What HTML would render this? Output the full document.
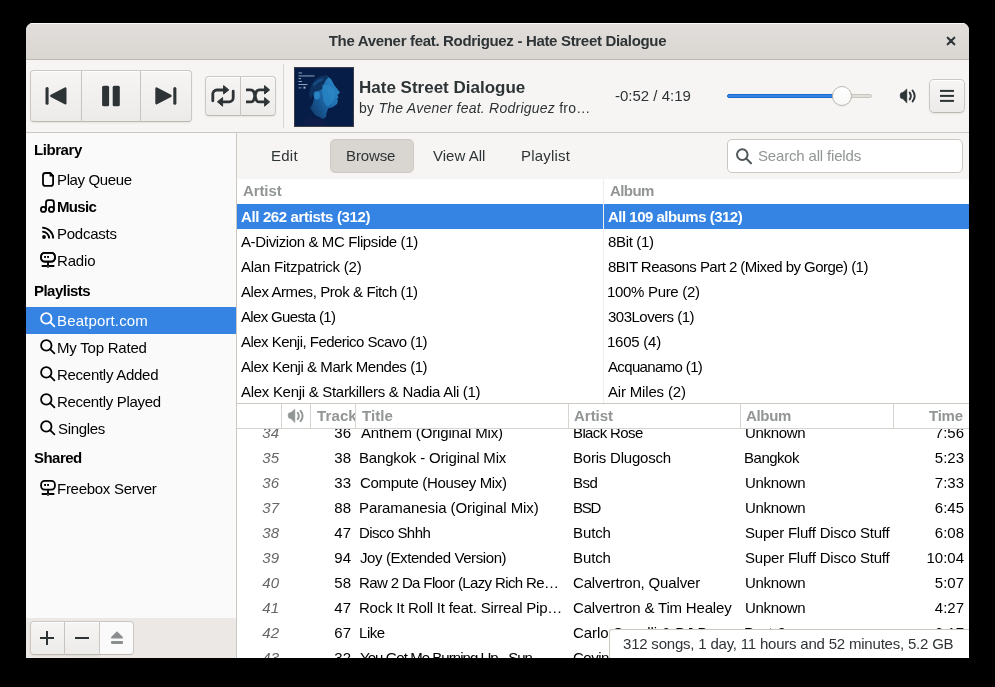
<!DOCTYPE html>
<html><head><meta charset="utf-8">
<style>
*{box-sizing:border-box;margin:0;padding:0}
html,body{width:995px;height:687px;overflow:hidden;background:#000;font-family:"Liberation Sans",sans-serif;color:#2e3436}
.a{position:absolute}
.t{position:absolute;white-space:nowrap;line-height:20px;will-change:transform}
#win{position:absolute;left:26px;top:23px;width:943px;height:635px;background:#f6f5f4;border-radius:7px 7px 0 0;overflow:hidden}
#title{position:absolute;left:0;top:0;width:943px;height:37px;background:linear-gradient(#e1dedb,#dad6d2);border-bottom:1px solid #bfb8b1;box-shadow:inset 0 1px rgba(255,255,255,0.8)}
.btn{position:absolute;background:linear-gradient(#f6f5f4,#edebe9);border:1px solid #cdc7c2;border-bottom-color:#bfb8b1;box-shadow:inset 0 1px #fff,0 1px 2px rgba(0,0,0,0.07)}
#side{color:#000;position:absolute;left:0;top:110px;width:211px;height:525px;background:#fafafa;border-right:1px solid #cdc7c2;overflow:hidden}
#main{position:absolute;left:211px;top:110px;width:732px;height:525px;overflow:hidden}
</style></head><body>
<div id="win">
  <div id="title">
    <div class="t" style="left:0;width:943px;text-align:center;top:8px;font-weight:bold;font-size:15px;letter-spacing:-0.32px">The Avener feat. Rodriguez - Hate Street Dialogue</div>
    <svg class="a" style="left:915px;top:8px" width="20" height="20" viewBox="941 31 20 20"><path d="M947.7,37.7 L954.3,44.3 M954.3,37.7 L947.7,44.3" stroke="#2e3436" stroke-width="2.1" stroke-linecap="round"/></svg>
  </div>
  <!-- toolbar -->
  <div class="a grp" style="left:4px;top:47px;width:162px;height:52px">
    <div class="btn" style="left:0;top:0;width:52px;height:52px;border-radius:4px 0 0 4px"></div>
    <div class="btn" style="left:52px;top:0;width:59px;height:52px;border-left:none;border-radius:0"></div>
    <div class="btn" style="left:111px;top:0;width:51px;height:52px;border-left:none;border-radius:0 4px 4px 0"></div>
  </div>
  <svg class="a" style="left:0;top:37px" width="943" height="72" viewBox="26 60 943 72">
    <g fill="#2e3436" stroke="#2e3436" stroke-linejoin="round">
      <rect x="45.5" y="87" width="3.1" height="17.8" rx="1.5" stroke="none"/>
      <path d="M51.3,95.9 L65.3,88.5 L65.3,103.3 Z" stroke-width="2.4"/>
      <rect x="102.1" y="85.7" width="7" height="20.5" rx="1.5" stroke="none"/>
      <rect x="112.7" y="85.7" width="7.1" height="20.5" rx="1.5" stroke="none"/>
      <path d="M156.5,88.5 L170.5,95.9 L156.5,103.3 Z" stroke-width="2.4"/>
      <rect x="173.3" y="87" width="3.1" height="17.8" rx="1.5" stroke="none"/>
    </g>
  </svg>
  <div class="a" style="left:179px;top:53px;width:71px;height:40px">
    <div class="btn" style="left:0;top:0;width:36px;height:40px;border-radius:4px 0 0 4px"></div>
    <div class="btn" style="left:36px;top:0;width:35px;height:40px;border-left:none;border-radius:0 4px 4px 0"></div>
  </div>
  <svg class="a" style="left:185px;top:62px" width="26" height="23" viewBox="0 0 26 23">
    <g fill="none" stroke="#2e3436" stroke-width="2.8" stroke-linecap="round">
      <path d="M1.8,15.8 V9 A4,4 0 0 1 5.8,5 H13"/>
      <path d="M22.2,6.2 V12.8 A4,4 0 0 1 18.2,16.8 H11"/>
    </g>
    <g fill="#2e3436" stroke="#2e3436" stroke-width="1" stroke-linejoin="round">
      <path d="M12.6,0.6 L17.8,4.9 L12.6,9 Z"/>
      <path d="M11.6,12.6 L6.4,16.8 L11.6,21.2 Z"/>
    </g>
  </svg>
  <svg class="a" style="left:219px;top:62px" width="26" height="23" viewBox="0 0 26 23">
    <g fill="none" stroke="#2e3436" stroke-width="2.8">
      <path d="M1,4.9 H5.5 C8.5,4.9 8.8,6.5 10,10.9 C11.2,15.3 11.5,16.9 14.5,16.9 H20"/>
      <path d="M1,16.9 H5.5 C8.5,16.9 8.8,15.3 10,10.9 C11.2,6.5 11.5,4.9 14.5,4.9 H20"/>
    </g>
    <g fill="#2e3436" stroke="#2e3436" stroke-width="1" stroke-linejoin="round">
      <path d="M19.6,0.6 L24.6,4.9 L19.6,9 Z"/>
      <path d="M19.6,12.6 L24.6,16.9 L19.6,21.2 Z"/>
    </g>
  </svg>
  <div class="a" style="left:257px;top:41px;width:1px;height:64px;background:#d9d5d1"></div>
  <!-- album art -->
  <div class="a" style="left:268px;top:44px;width:60px;height:60px;border:1px solid #3a3d44;background:#061d47;overflow:hidden">
    <svg width="58" height="58" viewBox="0 0 58 58">
      <defs>
        <linearGradient id="fg" x1="0.1" y1="0.9" x2="0.9" y2="0.2">
          <stop offset="0" stop-color="#103e70"/>
          <stop offset="0.45" stop-color="#1c64a3"/>
          <stop offset="1" stop-color="#2a84c4"/>
        </linearGradient>
        <filter id="bl" x="-10%" y="-10%" width="120%" height="120%"><feGaussianBlur stdDeviation="0.7"/></filter>
      </defs>
      <rect width="58" height="58" fill="#061d47"/><g filter="url(#bl)">
      <path d="M31,7.5 L36,11 L39.5,17.5 L42,20.5 L45,24.5 L42.5,27 L43.5,29.5 L42,31 L43,32.5 L42,36 L38,39 L33,40.5 L31.5,45 L31,49 L28,51 L20,47 L15,40 L18,35 L19,30 L18,24 L22,20 L27,12 Z" fill="url(#fg)"/>
      <path d="M14,27 C15,14 23,7 31,7.5 L33.5,9.5 C30,12 28.5,17 27.5,21 L24,22.5 L19,24 L16,31 Z" fill="#0c305e"/>
      <path d="M18,16 C21,12 25,10 29,10 L27,13 C24,14 21,16 19,19 Z" fill="#16497e"/>
      <ellipse cx="22" cy="27.5" rx="3" ry="4" fill="#2a82c2"/>
      <path d="M27,17 C33,16 38,19 40,24 C41,30 38,36 33,38 C29,38 27,30 27,17 Z" fill="#2f90d0" opacity="0.55"/>
      <path d="M10,49 C17,46 25,50 32,54 L34,58 L8,58 Z" fill="#081f48"/></g>
      <g fill="#9fb4cc">
        <rect x="3.5" y="4.5" width="3.5" height="0.9"/><rect x="3.5" y="7.5" width="16" height="0.9"/>
        <rect x="3.5" y="10.2" width="2.5" height="0.9"/><rect x="3.5" y="13" width="3.5" height="0.9"/>
        <rect x="3.5" y="16" width="9" height="0.9"/><rect x="3.5" y="19.5" width="3" height="0.8"/><rect x="8.5" y="18.6" width="2" height="2"/>
      </g>
    </svg>
  </div>
  <div class="t" style="left:333px;top:55px;font-size:17px;font-weight:bold;line-height:20px">Hate Street Dialogue</div>
  <div class="t" style="left:333px;top:74.5px;font-size:14px;letter-spacing:0.24px;line-height:20px">by <i>The Avener feat. Rodriguez</i> fro…</div>
  <div class="t" style="left:589px;top:63px;font-size:15px;line-height:20px">-0:52 / 4:19</div>
  <!-- slider -->
  <div class="a" style="left:701px;top:71px;width:145px;height:4px;border-radius:2px;background:#e1dedb;border:1px solid #cdc7c2"></div>
  <div class="a" style="left:701px;top:71px;width:118px;height:4px;border-radius:2px;background:#3584e4;border:1px solid #1b6acb"></div>
  <div class="a" style="left:806px;top:63px;width:20px;height:20px;border-radius:50%;background:linear-gradient(#fff,#f8f8f7);border:1px solid #bfb8b1;box-shadow:0 1px 1px rgba(0,0,0,0.05)"></div>
  <!-- volume icon -->
  <svg class="a" style="left:873px;top:65px" width="18" height="16" viewBox="0 0 18 16">
    <path d="M7.9,0.9 V15.1 L3.8,10.8 H3.2 A2.1,3.2 0 0 1 3.2,4.4 H3.8 Z" fill="#2e3436" stroke="#2e3436" stroke-width="0.5" stroke-linejoin="round"/>
    <path d="M10.7,4.6 Q13,8 10.7,11.4" fill="none" stroke="#2e3436" stroke-width="1.9" stroke-linecap="round"/>
    <path d="M13.6,2.5 Q17.8,8 13.6,13.5" fill="none" stroke="#2e3436" stroke-width="1.9" stroke-linecap="round"/>
  </svg>
  <div class="btn" style="left:903px;top:56px;width:36px;height:34px;border-radius:5px"></div>
  <svg class="a" style="left:914px;top:66px" width="14" height="14" viewBox="0 0 14 14">
    <rect x="0" y="0.9" width="14" height="2" fill="#2e3436"/>
    <rect x="0" y="5.9" width="14" height="2" fill="#2e3436"/>
    <rect x="0" y="10.9" width="14" height="2" fill="#2e3436"/>
  </svg>
  <div class="a" style="left:0;top:109px;width:943px;height:1px;background:#cdc7c2"></div>


  <div id="side">
<div class="t" style="left:7.6px;top:7.3px;font-size:15px;font-weight:bold;letter-spacing:-0.433px">Library</div>
<div class="t" style="left:31.0px;top:37.3px;font-size:15px;letter-spacing:-0.378px">Play Queue</div>
<div class="t" style="left:31.2px;top:63.8px;font-size:15px;font-weight:bold;letter-spacing:-0.650px">Music</div>
<div class="t" style="left:31.0px;top:90.8px;font-size:15px;letter-spacing:-0.257px">Podcasts</div>
<div class="t" style="left:31.0px;top:117.8px;font-size:15px;letter-spacing:-0.175px">Radio</div>
<div class="t" style="left:7.6px;top:147.8px;font-size:15px;font-weight:bold;letter-spacing:-0.525px">Playlists</div>
<div class="a" style="left:0px;top:174px;width:210px;height:27px;background:#3584e4"></div>
<div class="t" style="left:31.4px;top:177.8px;font-size:15px;color:#fff;letter-spacing:0.145px">Beatport.com</div>
<div class="t" style="left:31.2px;top:204.8px;font-size:15px;letter-spacing:-0.218px">My Top Rated</div>
<div class="t" style="left:31.2px;top:231.8px;font-size:15px;letter-spacing:-0.277px">Recently Added</div>
<div class="t" style="left:31.2px;top:258.8px;font-size:15px;letter-spacing:-0.300px">Recently Played</div>
<div class="t" style="left:31.7px;top:285.8px;font-size:15px;letter-spacing:-0.317px">Singles</div>
<div class="t" style="left:8.0px;top:315.3px;font-size:15px;font-weight:bold;letter-spacing:-0.540px">Shared</div>
<div class="t" style="left:31.2px;top:345.8px;font-size:15px;letter-spacing:-0.277px">Freebox Server</div>
<svg class="a" style="left:0;top:0" width="210" height="525" viewBox="26 133 210 525">
 <g fill="none" stroke="#000" stroke-width="1.8" stroke-linejoin="round" stroke-linecap="round">
  <path d="M45.5,173 H50.2 L53.1,176 V183.4 A2.5,2.5 0 0 1 50.6,185.9 H45.5 A2.5,2.5 0 0 1 43,183.4 V175.5 A2.5,2.5 0 0 1 45.5,173 Z"/>
  <path d="M46,209.4 V202.7 A2.5,2.5 0 0 1 48.5,200.2 H51.4 A2.5,2.5 0 0 1 53.9,202.7 V209.4"/>
  <circle cx="43.4" cy="209.4" r="2.5"/><circle cx="51.4" cy="209.4" r="2.5"/>
  <rect x="41.1" y="252.8" width="13.8" height="8.8" rx="3.5"/>
 </g>
 <path d="M50.2,173 V176 H53.1 Z" fill="#000" stroke="#000" stroke-width="1.2" stroke-linejoin="round"/>
 <g fill="none" stroke="#000" stroke-width="1.9">
  <path d="M42.2,231.6 A7,7 0 0 1 49.2,238.6"/>
  <path d="M42.2,227.6 A11,11 0 0 1 53.2,238.6"/>
 </g>
 <circle cx="44" cy="237" r="1.9" fill="#000"/>
 <g fill="none" stroke="#000" stroke-width="1.8" stroke-linejoin="round" stroke-linecap="round"><rect x="41.1" y="252.8" width="13.8" height="8.8" rx="3.5"/><path d="M48,262.5 V264.8 M42.4,266.0 H46.6 M49.4,266.0 H53.7"/></g><g fill="#000"><rect x="44.1" y="256.0" width="1.9" height="1.9"/><rect x="47.1" y="256.0" width="1.9" height="1.9"/></g><circle cx="48" cy="266.0" r="1.3" fill="none" stroke="#000" stroke-width="1"/>
 <g fill="none" stroke-width="1.8" stroke-linecap="round">
  <circle cx="46.3" cy="318.4" r="5.2" stroke="#fff"/><path d="M50.1,322.2 L54.4,326.3" stroke="#fff"/>
  <circle cx="46.3" cy="345.4" r="5.2" stroke="#000"/><path d="M50.1,349.2 L54.4,353.3" stroke="#000"/><circle cx="46.3" cy="372.4" r="5.2" stroke="#000"/><path d="M50.1,376.2 L54.4,380.3" stroke="#000"/><circle cx="46.3" cy="399.4" r="5.2" stroke="#000"/><path d="M50.1,403.2 L54.4,407.3" stroke="#000"/><circle cx="46.3" cy="426.4" r="5.2" stroke="#000"/><path d="M50.1,430.2 L54.4,434.3" stroke="#000"/>
 </g>
 <g fill="none" stroke="#000" stroke-width="1.8" stroke-linejoin="round" stroke-linecap="round"><rect x="41.1" y="480.8" width="13.8" height="8.8" rx="3.5"/><path d="M48,490.5 V492.8 M42.4,494.0 H46.6 M49.4,494.0 H53.7"/></g><g fill="#000"><rect x="44.1" y="484.0" width="1.9" height="1.9"/><rect x="47.1" y="484.0" width="1.9" height="1.9"/></g><circle cx="48" cy="494.0" r="1.3" fill="none" stroke="#000" stroke-width="1"/>
</svg>
<div class="a" style="left:0px;top:485px;width:210px;height:40px;background:#ebe8e6"></div>
<div class="btn" style="left:4px;top:488px;width:35px;height:34px;border-radius:4px 0 0 4px"></div>
<div class="btn" style="left:39px;top:488px;width:35px;height:34px;border-left:none;border-radius:0"></div>
<div class="btn" style="left:74px;top:488px;width:34px;height:34px;border-left:none;border-radius:0 4px 4px 0;background:#fafafa;box-shadow:none"></div>
<svg class="a" style="left:0;top:0" width="210" height="525" viewBox="26 133 210 525">
 <path d="M47,631 V645 M40,638 H54" stroke="#2e3436" stroke-width="2"/>
 <path d="M75,638 H89" stroke="#2e3436" stroke-width="2"/>
 <path d="M117,631.3 L122.8,637 Q123.5,638.6 122,638.6 H112 Q110.5,638.6 111.2,637 Z" fill="#8b8e8f"/>
 <rect x="111" y="641" width="12" height="3" rx="1" fill="#8b8e8f"/>
</svg>
  </div>
  <div id="main">
<div class="a" style="left:0px;top:0px;width:732px;height:46px;background:#f6f5f4"></div>
<div class="t" style="left:34.2px;top:12.8px;font-size:15px;letter-spacing:0.233px">Edit</div>
<div class="a" style="left:93px;top:6px;width:84px;height:34px;background:#d9d5d1;border:1px solid #cfcac6;border-radius:5px"></div>
<div class="t" style="left:109.4px;top:12.8px;font-size:15px;letter-spacing:-0.120px">Browse</div>
<div class="t" style="left:196.0px;top:12.8px;font-size:15px;letter-spacing:0.029px">View All</div>
<div class="t" style="left:284.2px;top:12.8px;font-size:15px;letter-spacing:0.200px">Playlist</div>
<div class="a" style="left:490px;top:6px;width:236px;height:34px;background:#fff;border:1px solid #cdc7c2;border-radius:5px"></div>
<svg class="a" style="left:0;top:0" width="732" height="60" viewBox="237 133 732 60">
 <circle cx="742.3" cy="154.6" r="5.3" fill="none" stroke="#50575a" stroke-width="2"/>
 <path d="M746.2,158.5 L751,163.3" stroke="#50575a" stroke-width="2" stroke-linecap="round"/>
</svg>
<div class="t" style="left:520.6px;top:12.8px;font-size:15px;color:#929595;letter-spacing:-0.169px">Search all fields</div>
<div class="a" style="left:0px;top:46px;width:732px;height:224px;background:#fff"></div>
<div class="a" style="left:366px;top:46px;width:1px;height:224px;background:#f1efed"></div>
<div class="t" style="left:5.7px;top:47.8px;font-size:15px;font-weight:bold;color:#929595;letter-spacing:-0.100px">Artist</div>
<div class="t" style="left:372.8px;top:47.8px;font-size:15px;font-weight:bold;color:#929595;letter-spacing:-0.575px">Album</div>
<div class="a" style="left:0px;top:71px;width:366px;height:25px;background:#3584e4"></div>
<div class="a" style="left:367px;top:71px;width:365px;height:25px;background:#3584e4"></div>
<div class="t" style="left:4.2px;top:73.8px;font-size:15px;font-weight:bold;color:#fff;letter-spacing:-0.365px">All 262 artists (312)</div>
<div class="t" style="left:370.9px;top:73.8px;font-size:15px;font-weight:bold;color:#fff;letter-spacing:-0.505px">All 109 albums (312)</div>
<div class="t" style="left:4.1px;top:98.8px;font-size:15px;color:#000;letter-spacing:-0.385px">A-Divizion &amp; MC Flipside (1)</div>
<div class="t" style="left:370.6px;top:98.8px;font-size:15px;color:#000;letter-spacing:-0.343px">8Bit (1)</div>
<div class="t" style="left:4.1px;top:123.8px;font-size:15px;color:#000;letter-spacing:-0.232px">Alan Fitzpatrick (2)</div>
<div class="t" style="left:370.6px;top:123.8px;font-size:15px;color:#000;letter-spacing:-0.541px">8BIT Reasons Part 2 (Mixed by Gorge) (1)</div>
<div class="t" style="left:4.1px;top:148.8px;font-size:15px;color:#000;letter-spacing:-0.419px">Alex Armes, Prok &amp; Fitch (1)</div>
<div class="t" style="left:370.1px;top:148.8px;font-size:15px;color:#000;letter-spacing:-0.317px">100% Pure (2)</div>
<div class="t" style="left:4.1px;top:173.8px;font-size:15px;color:#000;letter-spacing:-0.657px">Alex Guesta (1)</div>
<div class="t" style="left:370.6px;top:173.8px;font-size:15px;color:#000;letter-spacing:-0.500px">303Lovers (1)</div>
<div class="t" style="left:4.1px;top:198.8px;font-size:15px;color:#000;letter-spacing:-0.524px">Alex Kenji, Federico Scavo (1)</div>
<div class="t" style="left:370.1px;top:198.8px;font-size:15px;color:#000;letter-spacing:-0.243px">1605 (4)</div>
<div class="t" style="left:4.1px;top:223.8px;font-size:15px;color:#000;letter-spacing:-0.437px">Alex Kenji &amp; Mark Mendes (1)</div>
<div class="t" style="left:371.2px;top:223.8px;font-size:15px;color:#000;letter-spacing:-0.642px">Acquanamo (1)</div>
<div class="t" style="left:4.1px;top:248.8px;font-size:15px;color:#000;letter-spacing:-0.290px">Alex Kenji &amp; Starkillers &amp; Nadia Ali (1)</div>
<div class="t" style="left:371.2px;top:248.8px;font-size:15px;color:#000;letter-spacing:-0.175px">Air Miles (2)</div>
<div class="a" style="left:0px;top:270px;width:732px;height:1px;background:#cdc7c2"></div>
<div class="a" style="left:0px;top:271px;width:732px;height:24px;background:#fff"></div>
<div class="a" style="left:0px;top:295px;width:732px;height:1px;background:#d8d4d0"></div>
<div class="a" style="left:44px;top:271px;width:1px;height:24px;background:#d8d4d0"></div>
<div class="a" style="left:73px;top:271px;width:1px;height:24px;background:#d8d4d0"></div>
<div class="a" style="left:118px;top:271px;width:1px;height:24px;background:#d8d4d0"></div>
<div class="a" style="left:331px;top:271px;width:1px;height:24px;background:#d8d4d0"></div>
<div class="a" style="left:503px;top:271px;width:1px;height:24px;background:#d8d4d0"></div>
<div class="a" style="left:656px;top:271px;width:1px;height:24px;background:#d8d4d0"></div>
<svg class="a" style="left:50px;top:275px" width="18" height="16" viewBox="0 0 18 16">
 <path d="M7.9,1.3 V14.6 L3.8,10.6 H3.2 A2.1,3 0 0 1 3.2,4.6 H3.8 Z" fill="#929595" stroke="#929595" stroke-width="0.5" stroke-linejoin="round"/>
 <path d="M10.7,4.8 Q13,8 10.7,11.2" fill="none" stroke="#929595" stroke-width="1.9" stroke-linecap="round"/>
 <path d="M13.6,2.8 Q17.6,8 13.6,13.2" fill="none" stroke="#929595" stroke-width="1.9" stroke-linecap="round"/>
</svg>
<div class="a" style="left:80px;top:271px;width:38px;height:24px;overflow:hidden"><div class="t" style="left:0.2px;top:1.8px;font-size:15px;font-weight:bold;color:#929595;letter-spacing:0.125px">Track</div>
</div>
<div class="t" style="left:125.0px;top:272.8px;font-size:15px;font-weight:bold;color:#929595;letter-spacing:0.100px">Title</div>
<div class="t" style="left:336.9px;top:272.8px;font-size:15px;font-weight:bold;color:#929595;letter-spacing:-0.020px">Artist</div>
<div class="t" style="left:509.1px;top:272.8px;font-size:15px;font-weight:bold;color:#929595;letter-spacing:-0.325px">Album</div>
<div class="t" style="left:691.7px;top:272.8px;font-size:15px;font-weight:bold;color:#929595;letter-spacing:-0.233px">Time</div>
<div class="a" style="left:0;top:296px;width:732px;height:229px;overflow:hidden;background:#fff">
<div class="t" style="left:-258.2px;width:300px;text-align:right;top:-5.9px;font-size:15px;font-style:italic;color:#666">34</div>
<div class="t" style="left:-186.0px;width:300px;text-align:right;top:-5.9px;font-size:15px;color:#000">36</div>
<div class="t" style="left:123.5px;top:-5.9px;font-size:15px;color:#000;width:206px;overflow:hidden;text-overflow:clip;letter-spacing:-0.150px">Anthem (Original Mix)</div>
<div class="t" style="left:335.6px;top:-5.9px;font-size:15px;color:#000;width:164px;overflow:hidden;text-overflow:clip;letter-spacing:-0.622px">Black Rose</div>
<div class="t" style="left:507.5px;top:-5.9px;font-size:15px;color:#000;width:146px;overflow:hidden;text-overflow:clip;letter-spacing:-0.317px">Unknown</div>
<div class="t" style="left:427.0px;width:300px;text-align:right;top:-5.9px;font-size:15px;color:#000">7:56</div>
<div class="t" style="left:-258.2px;width:300px;text-align:right;top:19.1px;font-size:15px;font-style:italic;color:#666">35</div>
<div class="t" style="left:-186.0px;width:300px;text-align:right;top:19.1px;font-size:15px;color:#000">38</div>
<div class="t" style="left:122.3px;top:19.1px;font-size:15px;color:#000;width:206px;overflow:hidden;text-overflow:clip;letter-spacing:-0.171px">Bangkok - Original Mix</div>
<div class="t" style="left:335.6px;top:19.1px;font-size:15px;color:#000;width:164px;overflow:hidden;text-overflow:clip;letter-spacing:-0.215px">Boris Dlugosch</div>
<div class="t" style="left:507.4px;top:19.1px;font-size:15px;color:#000;width:146px;overflow:hidden;text-overflow:clip;letter-spacing:-0.483px">Bangkok</div>
<div class="t" style="left:427.0px;width:300px;text-align:right;top:19.1px;font-size:15px;color:#000">5:23</div>
<div class="t" style="left:-258.2px;width:300px;text-align:right;top:44.1px;font-size:15px;font-style:italic;color:#666">36</div>
<div class="t" style="left:-186.0px;width:300px;text-align:right;top:44.1px;font-size:15px;color:#000">33</div>
<div class="t" style="left:122.7px;top:44.1px;font-size:15px;color:#000;width:206px;overflow:hidden;text-overflow:clip;letter-spacing:-0.337px">Compute (Housey Mix)</div>
<div class="t" style="left:335.6px;top:44.1px;font-size:15px;color:#000;width:164px;overflow:hidden;text-overflow:clip;letter-spacing:-0.450px">Bsd</div>
<div class="t" style="left:507.5px;top:44.1px;font-size:15px;color:#000;width:146px;overflow:hidden;text-overflow:clip;letter-spacing:-0.317px">Unknown</div>
<div class="t" style="left:427.0px;width:300px;text-align:right;top:44.1px;font-size:15px;color:#000">7:33</div>
<div class="t" style="left:-258.2px;width:300px;text-align:right;top:69.1px;font-size:15px;font-style:italic;color:#666">37</div>
<div class="t" style="left:-186.0px;width:300px;text-align:right;top:69.1px;font-size:15px;color:#000">88</div>
<div class="t" style="left:122.3px;top:69.1px;font-size:15px;color:#000;width:206px;overflow:hidden;text-overflow:clip;letter-spacing:-0.080px">Paramanesia (Original Mix)</div>
<div class="t" style="left:335.6px;top:69.1px;font-size:15px;color:#000;width:164px;overflow:hidden;text-overflow:clip;letter-spacing:-1.250px">BSD</div>
<div class="t" style="left:507.5px;top:69.1px;font-size:15px;color:#000;width:146px;overflow:hidden;text-overflow:clip;letter-spacing:-0.317px">Unknown</div>
<div class="t" style="left:427.0px;width:300px;text-align:right;top:69.1px;font-size:15px;color:#000">6:45</div>
<div class="t" style="left:-258.2px;width:300px;text-align:right;top:94.1px;font-size:15px;font-style:italic;color:#666">38</div>
<div class="t" style="left:-186.0px;width:300px;text-align:right;top:94.1px;font-size:15px;color:#000">47</div>
<div class="t" style="left:122.3px;top:94.1px;font-size:15px;color:#000;width:206px;overflow:hidden;text-overflow:clip;letter-spacing:-0.544px">Disco Shhh</div>
<div class="t" style="left:335.6px;top:94.1px;font-size:15px;color:#000;width:164px;overflow:hidden;text-overflow:clip;letter-spacing:-0.100px">Butch</div>
<div class="t" style="left:507.9px;top:94.1px;font-size:15px;color:#000;width:146px;overflow:hidden;text-overflow:clip;letter-spacing:-0.218px">Super Fluff Disco Stuff</div>
<div class="t" style="left:427.0px;width:300px;text-align:right;top:94.1px;font-size:15px;color:#000">6:08</div>
<div class="t" style="left:-258.2px;width:300px;text-align:right;top:119.1px;font-size:15px;font-style:italic;color:#666">39</div>
<div class="t" style="left:-186.0px;width:300px;text-align:right;top:119.1px;font-size:15px;color:#000">94</div>
<div class="t" style="left:123.3px;top:119.1px;font-size:15px;color:#000;width:206px;overflow:hidden;text-overflow:clip;letter-spacing:-0.405px">Joy (Extended Version)</div>
<div class="t" style="left:335.6px;top:119.1px;font-size:15px;color:#000;width:164px;overflow:hidden;text-overflow:clip;letter-spacing:-0.100px">Butch</div>
<div class="t" style="left:507.9px;top:119.1px;font-size:15px;color:#000;width:146px;overflow:hidden;text-overflow:clip;letter-spacing:-0.218px">Super Fluff Disco Stuff</div>
<div class="t" style="left:427.0px;width:300px;text-align:right;top:119.1px;font-size:15px;color:#000">10:04</div>
<div class="t" style="left:-258.2px;width:300px;text-align:right;top:144.1px;font-size:15px;font-style:italic;color:#666">40</div>
<div class="t" style="left:-186.0px;width:300px;text-align:right;top:144.1px;font-size:15px;color:#000">58</div>
<div class="t" style="left:122.3px;top:144.1px;font-size:15px;color:#000;width:206px;overflow:hidden;text-overflow:clip;letter-spacing:-0.629px">Raw 2 Da Floor (Lazy Rich Re…</div>
<div class="t" style="left:336.0px;top:144.1px;font-size:15px;color:#000;width:164px;overflow:hidden;text-overflow:clip;letter-spacing:-0.161px">Calvertron, Qualver</div>
<div class="t" style="left:507.5px;top:144.1px;font-size:15px;color:#000;width:146px;overflow:hidden;text-overflow:clip;letter-spacing:-0.317px">Unknown</div>
<div class="t" style="left:427.0px;width:300px;text-align:right;top:144.1px;font-size:15px;color:#000">5:07</div>
<div class="t" style="left:-258.2px;width:300px;text-align:right;top:169.1px;font-size:15px;font-style:italic;color:#666">41</div>
<div class="t" style="left:-186.0px;width:300px;text-align:right;top:169.1px;font-size:15px;color:#000">47</div>
<div class="t" style="left:122.3px;top:169.1px;font-size:15px;color:#000;width:206px;overflow:hidden;text-overflow:clip;letter-spacing:-0.230px">Rock It Roll It feat. Sirreal Pip…</div>
<div class="t" style="left:336.0px;top:169.1px;font-size:15px;color:#000;width:164px;overflow:hidden;text-overflow:clip;letter-spacing:-0.177px">Calvertron &amp; Tim Healey</div>
<div class="t" style="left:507.5px;top:169.1px;font-size:15px;color:#000;width:146px;overflow:hidden;text-overflow:clip;letter-spacing:-0.317px">Unknown</div>
<div class="t" style="left:427.0px;width:300px;text-align:right;top:169.1px;font-size:15px;color:#000">4:27</div>
<div class="t" style="left:-258.2px;width:300px;text-align:right;top:194.1px;font-size:15px;font-style:italic;color:#666">42</div>
<div class="t" style="left:-186.0px;width:300px;text-align:right;top:194.1px;font-size:15px;color:#000">67</div>
<div class="t" style="left:122.3px;top:194.1px;font-size:15px;color:#000;width:206px;overflow:hidden;text-overflow:clip;letter-spacing:-0.467px">Like</div>
<div class="t" style="left:336.0px;top:194.1px;font-size:15px;color:#000;width:164px;overflow:hidden;text-overflow:clip;letter-spacing:-0.076px">Carlo Cavalli &amp; DJ Dan</div>
<div class="t" style="left:507.4px;top:194.1px;font-size:15px;color:#000;width:146px;overflow:hidden;text-overflow:clip;letter-spacing:0.380px">Part 2</div>
<div class="t" style="left:427.0px;width:300px;text-align:right;top:194.1px;font-size:15px;color:#000">6:17</div>
<div class="t" style="left:-258.2px;width:300px;text-align:right;top:219.1px;font-size:15px;font-style:italic;color:#666">43</div>
<div class="t" style="left:-186.0px;width:300px;text-align:right;top:219.1px;font-size:15px;color:#000">32</div>
<div class="t" style="left:123.1px;top:219.1px;font-size:15px;color:#000;width:206px;overflow:hidden;text-overflow:clip;letter-spacing:-0.959px">You Got Me Burning Up - Sun…</div>
<div class="t" style="left:336.0px;top:219.1px;font-size:15px;color:#000;width:164px;overflow:hidden;text-overflow:clip;letter-spacing:-0.475px">Covington</div>
<div class="t" style="left:507.5px;top:219.1px;font-size:15px;color:#000;width:146px;overflow:hidden;text-overflow:clip;letter-spacing:-0.317px">Unknown</div>
<div class="t" style="left:427.0px;width:300px;text-align:right;top:219.1px;font-size:15px;color:#000">5:51</div>
</div>
<div class="a" style="left:372px;top:496px;width:360px;height:30px;background:#fff;border:1px solid #cdc7c2;border-right:none;border-bottom:none;border-radius:3px 0 0 0"></div>
<div class="t" style="left:386.0px;top:500.8px;font-size:15px;color:#2e3436;letter-spacing:-0.206px">312 songs, 1 day, 11 hours and 52 minutes, 5.2 GB</div>
  </div>
</div>
</body></html>
